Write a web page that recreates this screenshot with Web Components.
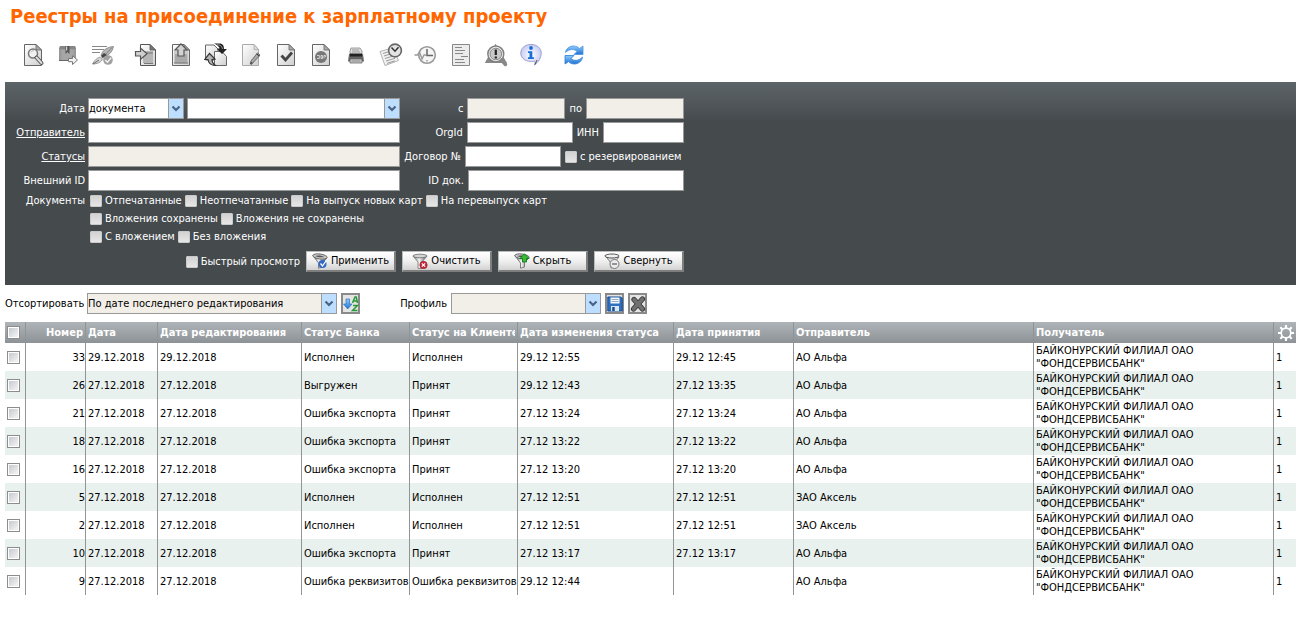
<!DOCTYPE html>
<html lang="ru">
<head>
<meta charset="utf-8">
<meta name="viewport" content="width=device-width, initial-scale=1">
<title>Реестры на присоединение к зарплатному проекту</title>
<style>
body{margin:0;background:#fff;color:#000;font:11px/14px "DejaVu Sans Condensed","DejaVu Sans",sans-serif}
</style>
</head>
<body>
<registry-page></registry-page>
<script>
const BASE = `*{box-sizing:border-box}
button,input,select{font:inherit;color:inherit;margin:0;border-radius:0}`;

/* Shared look of text boxes, drop-downs and tick boxes */
const FIELDS = `
input[type=text],select{height:21px;min-width:0;border:1px solid #999;background:#fff;color:#000;padding:0;outline:0}
input[type=text]:disabled,select.off{background:#f2eee8}
.combo{display:grid;min-width:0}
.combo>*{grid-area:1/1}
.combo select{appearance:none;width:100%;padding-right:16px}
.combo svg{justify-self:end;width:16px;height:21px;pointer-events:none}`;
const arrow = `<svg viewBox="0 0 16 21"><rect width="16" height="21" fill="#999"/><rect x="1" y="1" width="14" height="19" fill="#bddeff"/><path d="M4.5 8.500l3.500 3.500 3.500-3.500" fill="none" stroke="#4a6387" stroke-width="2.200"/></svg>`;

const define = (name, html) => {
  const tpl = document.createElement('template');
  tpl.innerHTML = html;
  customElements.define(name, class extends HTMLElement {
    constructor() {
      super();
      this.attachShadow({mode: 'open'}).append(tpl.content.cloneNode(true));
    }
  });
};

const DEFS = `<defs>
<linearGradient id="p" x1="0" y1="0" x2="1" y2="1"><stop offset="0" stop-color="#fff"/><stop offset="1" stop-color="#cfcfcf"/></linearGradient>
<linearGradient id="f" x1="0" y1="0" x2="1" y2="0"><stop offset="0" stop-color="#777"/><stop offset=".45" stop-color="#f4f4f4"/><stop offset="1" stop-color="#555"/></linearGradient>
<linearGradient id="b" x1="0" y1="0" x2="0" y2="1"><stop offset="0" stop-color="#8ecbfa"/><stop offset="1" stop-color="#1f72d2"/></linearGradient>
<radialGradient id="v"><stop offset="0" stop-color="#fff"/><stop offset="1" stop-color="#c9cdf5"/></radialGradient></defs>`;
const PAGE = `<path d="M3.500 1.500H15L20.500 7v15.500h-17z" fill="url(#p)" stroke="#666"/><path d="M15 1.500V7h5.500z" fill="#aaa" stroke="#666" stroke-width=".8"/>`;
const FUNNEL = `<path d="M1 3L6 9v6.500h4V9l5-6z" fill="url(#f)" stroke="#777" stroke-width=".8"/><ellipse cx="8" cy="3" rx="7" ry="1.800" fill="#d4d4d4" stroke="#666" stroke-width=".8"/>`;
const TILT = `<path d="M.8 2.500L6.500 10v5.200l4-1.200V9.500L15 5z" fill="url(#f)" stroke="#666" stroke-width=".8"/><ellipse cx="8" cy="3.500" rx="7.200" ry="2.500" transform="rotate(8 8 3.500)" fill="#c9c9c9" stroke="#555" stroke-width=".8"/><path d="M3 3c3-1 7-.5 9.500 1-3 .7-7 .3-9.500-1z" fill="#555"/>`;
const ICONS = {
view: [24, PAGE + `<circle cx="12" cy="10.500" r="4.500" fill="#f2f2f2" fill-opacity=".85" stroke="#777" stroke-width="1.500"/><path d="M10 9.500a3 3 0 0 1 3-2" stroke="#bbb" fill="none"/><path d="M15.500 14.500l5 5.500" stroke="#555" stroke-width="4" stroke-linecap="round"/><path d="M15.500 14.500l5 5.500" stroke="#ddd" stroke-width="2" stroke-linecap="round"/>`],
pack: [24, `<path d="M4 3h15l1 3v12H3V6z" fill="#999"/><path d="M4 3h15l1 3H3z" fill="#868686"/><path d="M5.500 7h12v10h-12z" fill="#a6a6a6"/><path d="M9.500 3h4v8l-2-2-2 2z" fill="#555"/><path d="M10.700 3.500v4" stroke="#eee"/><path d="M3 17.500h11" stroke="#666"/><path d="M12.500 15.500h4v-2.800l5 4.300-5 4.500v-2.800h-4z" fill="#f2f2f2" stroke="#777"/>`],
sign: [24, `<path d="M1 3.500h15M1 6.500h12M1 9.500h8" stroke="#888"/><path d="M10 12.500c1-5 6-8.500 12.500-9-1 5-4 8.500-9 10z" fill="#b5b5b5" stroke="#777" stroke-width=".7"/><path d="M21 4.500L10 16" stroke="#777" stroke-width=".8"/><path d="M13 10l-3 3 2 2 4-3z" fill="#444"/><path d="M1.500 21c2-4 5-6.500 8-7l2 2c-1 3-5 5-10 5z" fill="#d5d5d5" stroke="#888" stroke-width=".8"/><path d="M2 21l6-4" stroke="#666"/><circle cx="17" cy="17" r="4.800" fill="#a0a0a0"/><path d="M14.200 17l2.200 2.200 3.800-4.400" fill="none" stroke="#eee" stroke-width="1.500"/>`],
import: [24, `<path d="M6.500 1.500H16L21.500 7v15.500h-15z" fill="url(#p)" stroke="#555"/><path d="M9 8h10v12H9z" fill="#b5b5b5"/><path d="M16 1.500V7h5.500z" fill="#777" stroke="#555" stroke-width=".8"/><path d="M10 10h9M10 20.500h9" stroke="#777"/><path d="M1.500 8.500h5v-3.500l6.500 5.800-6.500 5.700v-3.500h-5z" fill="#cfcfcf" stroke="#555" stroke-width="1.200"/>`],
export: [24, PAGE + `<path d="M5.500 8h13v12.500h-13z" fill="#aaa"/><path d="M5.500 8h13v3h-13z" fill="#ccc"/><path d="M5 20h14" stroke="#777"/><path d="M12 .8l6 6.200h-3v6H9V7H6z" fill="#d2d2d2" stroke="#555" stroke-width="1.200"/>`],
swap: [24, `<path d="M1.500 2H10l4 4v11h-12.500z" fill="url(#p)" stroke="#666"/><path d="M10.500 8.500H18l4.500 5v9h-12z" fill="url(#p)" stroke="#666"/><path d="M10 .5h6.500C19 1 20 3 20 6h3l-5 5-5-5 2.700-.8C15 3.500 13 1.700 10 .5z" fill="#222"/><path d="M13 1.800c4 0 5 2 5.500 4.200" stroke="#aaa" fill="none"/><path d="M5.500 10.500L11 16l-3 .5c0 2.500 1.300 4.500 3.500 6-4 0-7-2-7.500-6H.8z" fill="#b4b4b4" stroke="#333" stroke-width="1.200"/>`],
edit: [24, `<path d="M3.500 1.500H15L19.500 6.500v16h-16z" fill="url(#p)" stroke="#aaa"/><path d="M15 1.500v5h4.500z" fill="#ddd" stroke="#aaa" stroke-width=".8"/><path d="M12.500 21.500l-1.200-.5.7-3 6.500-8 2.500 2z" fill="#aaa" stroke="#555" stroke-width=".8"/><path d="M17.500 11l3 2" stroke="#333"/><path d="M11.500 21l2-1-1.500-1z" fill="#222"/>`],
check: [24, PAGE + `<path d="M7.500 12.500l4 4.500L18 9.500" fill="none" stroke="#444" stroke-width="2.800"/>`],
stop: [24, PAGE + `<circle cx="12" cy="14" r="6" fill="#777"/><path d="M8 12.500h2.300v3H8M12 12.500v3h1.500v-3zM15 15.500v-3h1.500v1.700" fill="none" stroke="#ddd" stroke-width=".9"/>`],
print: [24, `<path d="M7 5h9l2 3v4H6V8z" fill="#ddd" stroke="#888" stroke-width=".8"/><path d="M8 7h7M8 9h8" stroke="#999"/><path d="M5 11h14l1 7.500H4z" fill="#666"/><path d="M6 10.500h12v3H6z" fill="#222"/><path d="M6 16h12v4H6z" fill="#ccc" stroke="#555" stroke-width=".7"/><path d="M7.500 18h9" stroke="#888"/>`],
history: [24, `<path d="M1 8.500L13.500 5l6 12.500L6 22.500z" fill="#f1f1f1" stroke="#aaa" stroke-width=".9"/><path d="M4 10.500l8-2.500M5 13l8-2.500M6 15.500l9-2.700M7 18l9-2.700M8 20.300l8-2.500" stroke="#999"/><circle cx="16" cy="7.500" r="6.400" fill="#e3e3e3" stroke="#666" stroke-width="1.600"/><path d="M12.500 4.500L16 8.200l3.500-4" fill="none" stroke="#333" stroke-width="1.500"/>`],
clock: [24, `<circle cx="13" cy="12" r="8.300" fill="#f5f5f5" stroke="#999" stroke-width="1.600"/><path d="M13 6v6.500h6" fill="none" stroke="#666" stroke-width="1.500"/><path d="M13 18.500v-1.500" stroke="#777"/><path d="M.5 12h3l2-3 2.500 7 2-4h2" fill="none" stroke="#999" stroke-width="1.400"/>`],
report: [24, `<path d="M3.500 1.500h17v21h-17z" fill="#ececec" stroke="#888"/><path d="M6 4.500h7M6 7.500h10M6 10.500h8M12 13.500h7M6 16.500h9M6 19.500h10" stroke="#888"/>`],
alert: [24, `<path d="M11.500 .8L23 20H.8z" fill="#888"/><circle cx="11.800" cy="11" r="8.700" fill="#808080"/><circle cx="11.800" cy="11" r="7.200" fill="#f2f2f2"/><circle cx="11.800" cy="11" r="5.800" fill="#c9c9c9" stroke="#888"/><path d="M11.800 6.500v5.500M11.800 13.500v2" stroke="#222" stroke-width="2.200"/><path d="M17.500 17l4 4.500" stroke="#888" stroke-width="3.500" stroke-linecap="round"/>`],
info: [24, `<path d="M12 1.500c6 0 10.200 3.600 10.200 8.600 0 4.600-2.600 8.900-6.700 11.900.6-1.800.6-2.900 0-3.900C7 19.500 1.800 15.500 1.800 10.100 1.800 5.100 6 1.500 12 1.500z" fill="url(#v)" stroke="#9ba0cf"/><path d="M18 17l-2 4.500" stroke="#555"/><circle cx="12" cy="5" r="1.900" fill="#176fd6"/><path d="M9 8.200h4.300v6h1.600v1.800H9v-1.800h1.500V10H9z" fill="#176fd6"/>`],
refresh: [24, `<path d="M3.500 9.500C4 5.500 7.500 3 11.500 3c2.500 0 4.500 1 6 2.500L21 3v8.500h-9l3-3c-3-3-8-2.500-11.500 1z" fill="url(#b)" stroke="#4b97e2" stroke-width=".8"/><path d="M20.500 14c-.5 4-4 7-8.200 7-2.300 0-4.300-.9-5.800-2.400L3 21v-8.500h9l-3 3c3 2.800 8 2.500 11.500-1.500z" fill="url(#b)" stroke="#2c7cd6" stroke-width=".8"/>`],
apply: [16, TILT + `<circle cx="10.500" cy="11" r="4" fill="#3267c4"/><path d="M8.500 10.500l2 2.500 3.500-5" fill="none" stroke="#fff" stroke-width="1.300"/>`],
clear: [16, FUNNEL + `<circle cx="11.500" cy="12" r="3.700" fill="#c62b3b" stroke="#8d1522" stroke-width=".6"/><path d="M9.800 10.300l3.400 3.400m0-3.400l-3.400 3.400" stroke="#fff" stroke-width="1.200"/>`],
hide: [16, TILT + `<path d="M10.500 .8l4.500 4.700h-2.500V9h-4V5.500H6z" fill="#39bd35" stroke="#107f19" stroke-width=".9"/>`],
roll: [16, `<path d="M1 2.500l6 7.500v5l4-1V9l4-5z" fill="#ddd" stroke="#777" stroke-width=".9"/><ellipse cx="8" cy="3" rx="7" ry="2" fill="#f1f1f1" stroke="#555"/><circle cx="10.500" cy="11" r="4.500" fill="#ececec" stroke="#777"/><path d="M8 11h5" stroke="#666" stroke-width="1.300"/>`],
sort: [16, `<path d="M3 3h3.500v5H9l-4.300 5L.5 8H3z" fill="url(#b)" stroke="#2d74bf" stroke-width=".7"/><path d="M9.500 7L12 1h1.200l1.300 6M10.500 5h4M10 9.500h4.500L9.500 14.500h5" fill="none" stroke="#279938" stroke-width="1.500"/>`],
save: [16, `<path d="M.8 1h13L15.200 2.500V15H.8z" fill="#2f6fc0" stroke="#174b8f"/><path d="M3.500 1.500h9v6h-9z" fill="#f5f9ff"/><path d="M4.500 3.500h7M4.500 5.500h7" stroke="#9ab"/><path d="M4 10h8v5H4z" fill="#dbe5f0"/><path d="M5.200 11h2.500v4H5.200z" fill="#174b8f"/>`],
remove: [16, `<path d="M4 3.500l8.500 9.500M12.500 3L3.500 13" stroke="#333" stroke-width="5.200" stroke-linecap="round"/><path d="M4 3.500l8.500 9.500M12.500 3L3.500 13" stroke="#707070" stroke-width="3.600" stroke-linecap="round"/>`],
gear: [16, `<g fill="none" stroke="#fff"><circle cx="8" cy="8" r="4.800" stroke-width="1.700"/><path d="M8 0v3M8 13v3M0 8h3M13 8h3M2.300 2.300l2.200 2.200M11.500 11.500l2.200 2.200M2.300 13.700l2.200-2.200M11.500 4.500l2.200-2.200" stroke-width="2.200"/></g>`]
};

/* <ui-icon name="…"> draws one glyph from ICONS */
customElements.define('ui-icon', class extends HTMLElement {
  constructor() {
    super();
    const [size, art] = ICONS[this.getAttribute('name')] || ICONS.view;
    this.attachShadow({mode: 'open'}).innerHTML = `<style>:host{display:block;flex:none}svg{display:block}</style>
<svg width="${size}" height="${size}" viewBox="0 0 ${size} ${size}" aria-hidden="true">${DEFS}${art}</svg>`;
  }
});

/* <check-item>text</check-item> */
define('check-item', `<style>${BASE}
:host{display:block}
label{display:flex;align-items:center;gap:3px;white-space:nowrap}
input{appearance:none;flex:none;width:12px;height:12px;border:1px solid #c9c9c9;border-radius:1px;background:linear-gradient(#d2d2d2,#e6e6e6)}
input:checked{background:#4a6387}
</style><label><input type="checkbox"><slot></slot></label>`);

/* <action-button icon="…">text</action-button> */
customElements.define('action-button', class extends HTMLElement {
  constructor() {
    super();
    const label = this.getAttribute('label');
    this.attachShadow({mode: 'open'}).innerHTML = `<style>${BASE}
:host{display:block}
button{display:flex;align-items:center;justify-content:center;gap:3px;width:100%;height:21px;padding:0;white-space:nowrap;color:#000;
background:linear-gradient(#fff,#f0f0f0 50%,#d2d2d2);border:2px solid #7e7e7e;border-top:1px solid #bbb;border-left:1px solid #bbb}
:host([square]) button{border:2px solid #8a8a8a;background:#e4e4e4}
:host([square]) ui-icon{margin:-1px}
</style><button type="button"${label ? ` aria-label="${label}"` : ''}><ui-icon name="${this.getAttribute('icon')}"></ui-icon><slot></slot></button>`;
  }
});

/* Toolbar: groups of picture buttons */
const GROUPS = [
  [['view','Просмотр'],['pack','Отправить'],['sign','Подписать']],
  [['import','Импорт'],['export','Экспорт'],['swap','Обмен'],['edit','Редактировать'],['check','Проверить'],['stop','Отозвать'],['print','Печать'],['history','История'],['clock','Журнал'],['report','Отчёт'],['alert','Контроль'],['info','Информация']],
  [['refresh','Обновить']]];
define('tool-bar', `<style>${BASE}
:host{display:flex;gap:19px;padding:15px 21px}
div{display:flex;gap:11px}
button{padding:0;border:0;background:none;width:24px;height:24px}
</style>` + GROUPS.map(g => `<div role="group">${g.map(([i, t]) => `<button type="button" aria-label="${t}"><ui-icon name="${i}"></ui-icon></button>`).join('')}</div>`).join(''));

define('filter-panel', `<style>${BASE}${FIELDS}
:host{display:block;padding:16px 0 13px;color:#fff;background:linear-gradient(#5d6467,#454a4d) 0 0/100% 40px no-repeat #454a4d}
form{display:grid;grid-template-columns:80px 312px 281px;column-gap:3px;row-gap:3px}
.name{text-align:right;line-height:21px}
a{color:inherit}
.line{display:flex;gap:3px}
.line .grow{flex:1}
.date{width:96px}
.right{display:flex;align-items:center;gap:4px}
.right>label:first-child{flex:1;text-align:right;white-space:nowrap}
.w98{width:98px}.w106{width:106px}.w96{width:96px}.w81{width:81px}.w216{width:216px}.w120{width:119px}
.docs{grid-column:2/4;display:grid;grid-auto-rows:18px;padding-left:2px;margin-top:-2px}
.docs .line{align-items:center;gap:3px}
.docname{text-align:right;line-height:18px;margin-top:-2px}
.acts{grid-column:1/4;display:flex;justify-content:flex-end;align-items:center;gap:6px;padding-top:2px}
action-button{width:90px}
</style>
<form>
<label class="name" for="kind">Дата</label>
<div class="line"><span class="combo date"><select id="kind"><option>документа</option></select>${arrow}</span>
<span class="combo grow"><select aria-label="Период"><option></option></select>${arrow}</span></div>
<div class="right"><label for="from">с</label><input type="text" id="from" class="w98" disabled><label for="to">по</label><input type="text" id="to" class="w98" disabled></div>
<label class="name" for="sender"><a href="#sender">Отправитель</a></label><input type="text" id="sender">
<div class="right"><label for="org">OrgId</label><input type="text" id="org" class="w106"><label for="inn">ИНН</label><input type="text" id="inn" class="w81"></div>
<label class="name" for="state"><a href="#state">Статусы</a></label><input type="text" id="state" disabled>
<div class="right"><label for="deal">Договор №</label><input type="text" id="deal" class="w96"><check-item class="w120">с резервированием</check-item></div>
<label class="name" for="ext">Внешний ID</label><input type="text" id="ext">
<div class="right"><label for="doc">ID док.</label><input type="text" id="doc" class="w216"></div>
<span class="docname">Документы</span>
<div class="docs">
<div class="line"><check-item>Отпечатанные</check-item><check-item>Неотпечатанные</check-item><check-item>На выпуск новых карт</check-item><check-item>На перевыпуск карт</check-item></div>
<div class="line"><check-item>Вложения сохранены</check-item><check-item>Вложения не сохранены</check-item></div>
<div class="line"><check-item>С вложением</check-item><check-item>Без вложения</check-item></div>
</div>
<div class="acts"><check-item>Быстрый просмотр</check-item><action-button icon="apply">Применить</action-button><action-button icon="clear">Очистить</action-button><action-button icon="hide">Скрыть</action-button><action-button icon="roll">Свернуть</action-button></div>
</form>`);

define('sort-bar', `<style>${BASE}${FIELDS}
:host{display:flex;align-items:center;gap:4px;padding:8px 0}
label{white-space:nowrap}
.first{width:78px}
.order{width:250px}.profile{width:150px}
action-button{width:19px}
.second{width:83px;text-align:right}
</style>
<label class="first" for="order">Отсортировать</label>
<span class="combo order"><select id="order" class="off"><option>По дате последнего редактирования</option></select>${arrow}</span>
<action-button square icon="sort" label="Порядок сортировки"></action-button>
<label class="second" for="profile">Профиль</label>
<span class="combo profile"><select id="profile" class="off"><option></option></select>${arrow}</span>
<action-button square icon="save" label="Сохранить профиль"></action-button>
<action-button square icon="remove" label="Удалить профиль"></action-button>`);

const ROWS = [
  [33,'29.12.2018','29.12.2018','Исполнен','Исполнен','29.12 12:55','29.12 12:45','АО Альфа'],
  [26,'27.12.2018','27.12.2018','Выгружен','Принят','29.12 12:43','27.12 13:35','АО Альфа'],
  [21,'27.12.2018','27.12.2018','Ошибка экспорта','Принят','27.12 13:24','27.12 13:24','АО Альфа'],
  [18,'27.12.2018','27.12.2018','Ошибка экспорта','Принят','27.12 13:22','27.12 13:22','АО Альфа'],
  [16,'27.12.2018','27.12.2018','Ошибка экспорта','Принят','27.12 13:20','27.12 13:20','АО Альфа'],
  [5,'27.12.2018','27.12.2018','Исполнен','Исполнен','27.12 12:51','27.12 12:51','ЗАО Аксель'],
  [2,'27.12.2018','27.12.2018','Исполнен','Исполнен','27.12 12:51','27.12 12:51','ЗАО Аксель'],
  [10,'27.12.2018','27.12.2018','Ошибка экспорта','Принят','27.12 13:17','27.12 13:17','АО Альфа'],
  [9,'27.12.2018','27.12.2018','Ошибка реквизитов','Ошибка реквизитов','29.12 12:44','','АО Альфа']];
const HEADS = ['Номер','Дата','Дата редактирования','Статус Банка','Статус на Клиенте','Дата изменения статуса','Дата принятия','Отправитель','Получатель'];
const WIDTHS = [21,60,72,144,108,108,156,120,0,0,22];
const tick = name => `<input type="checkbox" aria-label="${name}">`;
define('registry-table', `<style>${BASE}
:host{display:block}
table{width:100%;table-layout:fixed;border-collapse:separate;border-spacing:0}
th,td{padding:0 0 0 2px;border-right:1px solid #909496;text-align:left;white-space:nowrap}
th:last-child,td:last-child{border-right:0}
th{height:21px;color:#fff;background:linear-gradient(#aeb4b8,#8c9296);font-weight:bold}
th span{display:block;overflow:hidden;margin-right:2px}
td{height:28px;line-height:13px}
tbody tr:nth-child(even){background:#e9f1ee}
.num{text-align:right;padding-left:0}
.wrap{white-space:normal}
input{appearance:none;display:block;width:13px;height:13px;border:1px solid #8d8d8d;background:linear-gradient(135deg,#c5c9cf,#f6f6f6) 1px 1px/9px 9px no-repeat #fff}
input:checked{background:#4a6387}
th button{display:block;padding:0 0 0 2px;border:0;background:none}
</style>
<table>
<colgroup>${WIDTHS.map(w => w ? `<col style="width:${w}px">` : '<col>').join('')}</colgroup>
<thead><tr><th>${tick('Выбрать все')}</th>${HEADS.map((h, i) => `<th${i ? '' : ' class="num"'}><span>${h}</span></th>`).join('')}<th><button type="button" aria-label="Настройка колонок"><ui-icon name="gear"></ui-icon></button></th></tr></thead>
<tbody>${ROWS.map(r => `<tr><td>${tick('Документ ' + r[0])}</td>${r.map((c, i) => `<td${i ? '' : ' class="num"'}>${c}</td>`).join('')}<td class="wrap">БАЙКОНУРСКИЙ ФИЛИАЛ ОАО "ФОНДСЕРВИСБАНК"</td><td>1</td></tr>`).join('')}</tbody>
</table>`);

define('registry-page', `<style>${BASE}
:host{display:block;padding:4px 3px 23px 5px}
h1{margin:0 0 0 5px;font-size:20px;line-height:24px;font-weight:bold;color:#f60}
tool-bar{margin-left:-5px}
</style>
<h1>Реестры на присоединение к зарплатному проекту</h1>
<tool-bar></tool-bar>
<filter-panel></filter-panel>
<sort-bar></sort-bar>
<registry-table></registry-table>`);
</script>
</body>
</html>
